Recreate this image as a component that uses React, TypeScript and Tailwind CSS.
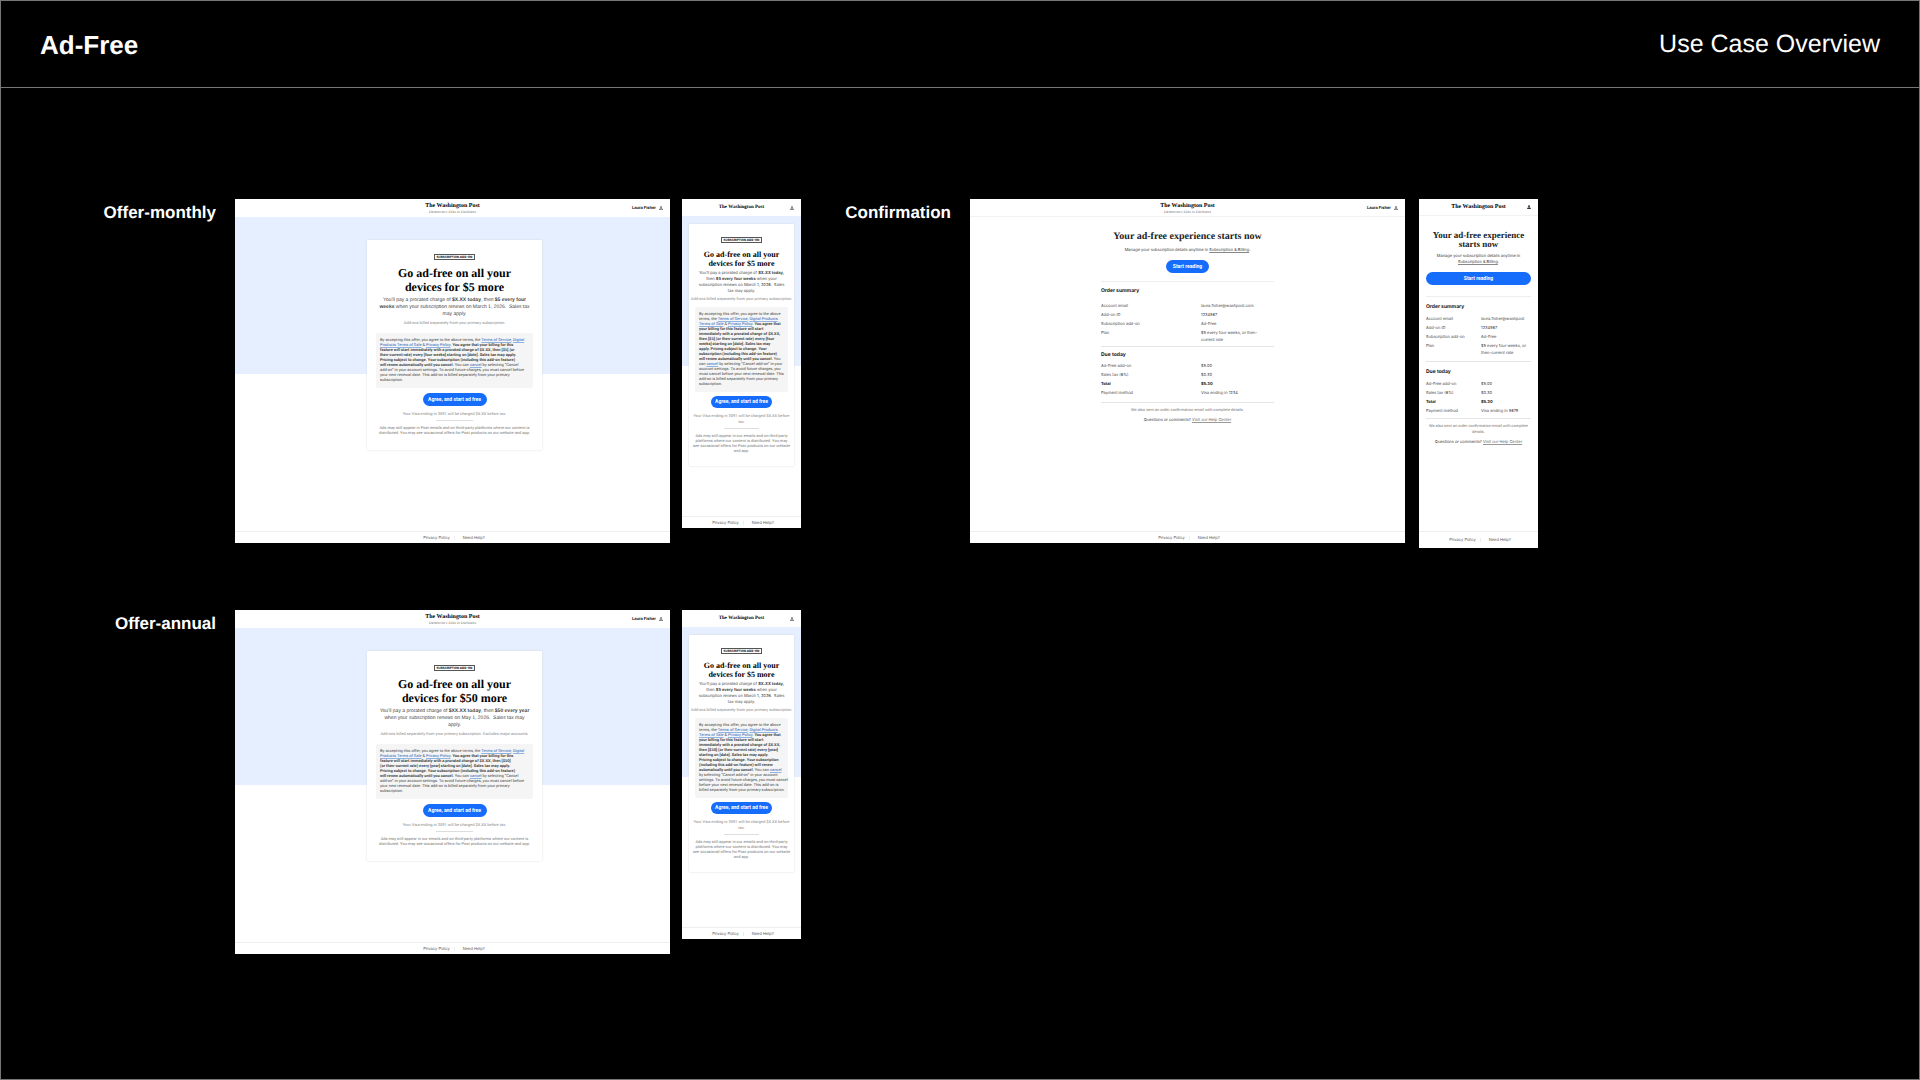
import type { ReactNode } from 'react'
import clsx from 'clsx'

const SERIF = "font-['Liberation_Serif',serif]"
const FINE = "font-['Roboto',sans-serif] text-[4px]"

function Lines({ items, className }: { items: ReactNode[]; className?: string }) {
  return (
    <p className={className}>
      {items.map((line, i) => (
        <span key={i} className="block whitespace-nowrap">{line}</span>
      ))}
    </p>
  )
}

function A({ children }: { children: ReactNode }) {
  return <a href="#" className="text-[#1f62b8] underline decoration-[#8fb4e3]">{children}</a>
}

function UserIcon({ solid }: { solid?: boolean }) {
  return (
    <svg viewBox="0 0 16 16" className="size-[4px] shrink-0" fill={solid ? '#111' : 'none'} stroke="#111" strokeWidth="2">
      <circle cx="8" cy="4.5" r="2.6" />
      <path d="M1.500 14.500c0-3 2-4 4.500-4h4c2.500 0 4.500 1 4.500 4z" />
    </svg>
  )
}

function Masthead({ mobile, solid, bordered }: { mobile?: boolean; solid?: boolean; bordered?: boolean }) {
  return (
    <header
      className={clsx(
        'grid grid-cols-[1fr_auto_1fr] items-center bg-white px-[7px]',
        mobile ? 'h-[17px]' : 'h-[18px]',
        bordered && 'border-b border-[#f2f2f2]'
      )}
    >
      <span />
      <div className={clsx(SERIF, 'text-center whitespace-nowrap text-black')}>
        <div
          className={clsx(
            'font-bold',
            mobile && !solid ? 'text-[5px] leading-[7px]' : 'text-[6px] leading-[8px]'
          )}
        >
          The Washington Post
        </div>
        {!mobile && <div className="text-[4px] leading-[4px] text-[#777] italic">Democracy Dies in Darkness</div>}
      </div>
      <div className="flex items-center justify-end gap-[3px] text-[4px] font-bold text-[#111]">
        {!mobile && <span>Laura Fisher</span>}
        <UserIcon solid={solid} />
      </div>
    </header>
  )
}

function PanelFooter({ tall }: { tall?: boolean }) {
  return (
    <footer
      className={clsx(
        'mt-auto flex items-center justify-center gap-1 border-t border-[#eee] bg-white pl-[3px] text-[4px] text-[#555]',
        tall ? 'h-[17px]' : 'h-[12px]'
      )}
    >
      <a href="#">Privacy Policy</a>
      <span className="h-1 w-px bg-[#eee]" />
      <a href="#" className="ml-1">Need Help?</a>
    </footer>
  )
}

function Pill({ children, className }: { children: ReactNode; className?: string }) {
  return (
    <button
      type="button"
      className={clsx(
        "block rounded-full bg-[#166dfc] text-center font-['Roboto',sans-serif] text-[5px] font-bold whitespace-nowrap text-white",
        className
      )}
    >
      {children}
    </button>
  )
}

type OfferCopy = {
  title: string[]
  price: ReactNode[]
  note: string
  legal: ReactNode[]
  charge: string[]
  ads: string[]
}

function Offer({ copy, mobile }: { copy: OfferCopy; mobile?: boolean }) {
  return (
    <article className={clsx('flex shrink-0 flex-col bg-white', mobile ? 'h-[329px] w-[119px]' : 'h-[344px] w-[435px]')}>
      <Masthead mobile={mobile} />
      <div
        className={clsx(
          'flex grow flex-col items-center',
          mobile
            ? 'bg-[linear-gradient(#e5efff_150px,#ffffff_150px)] pt-[8px]'
            : 'bg-[linear-gradient(#e5efff_157px,#ffffff_157px)] pt-[23px] pl-[4px]'
        )}
      >
        <section
          className={clsx(
            'flex flex-col items-center rounded-[1px] bg-white text-center text-[#444] shadow-[0_0_2px_#d5d5d5]',
            mobile ? 'w-[105px] pt-[13px] pb-[13px]' : 'w-[175px] pt-[14px] pb-[15px]'
          )}
        >
          <div className="border border-[#555] px-[2px] text-[3px] leading-[4px] font-bold whitespace-nowrap text-black">
            SUBSCRIPTION ADD-ON
          </div>
          <Lines
            items={copy.title}
            className={clsx(
              SERIF,
              'font-bold text-black',
              mobile ? 'mt-[7px] text-[8px] leading-[9px]' : 'mt-[6px] text-[12px] leading-[14px]'
            )}
          />
          <Lines
            items={copy.price}
            className={mobile ? 'mt-[2px] text-[4px] leading-[6px]' : "mt-[3px] font-['Liberation_Sans',sans-serif] text-[5px] leading-[7px]"}
          />
          <p className={clsx(FINE, 'mt-[2px] leading-[5px] whitespace-nowrap text-[#888]')}>{copy.note}</p>
          <Lines
            items={copy.legal}
            className={clsx(
              FINE,
              'rounded-[2px] bg-[#f5f5f5] pt-1 pb-[6px] pl-1 text-left leading-[5px]',
              mobile ? 'mt-[6px] w-[93px]' : 'mt-[8px] w-[157px]'
            )}
          />
          <Pill className={mobile ? 'mt-[4px] h-[12px] w-[61px]' : 'mt-[5px] h-[13px] w-[64px]'}>Agree, and start ad free</Pill>
          <Lines items={copy.charge} className={clsx(FINE, 'mt-[5px] leading-[6px] text-[#888]')} />
          <hr className={clsx('mt-[3px] border-[#ddd]', mobile ? 'w-[35px]' : 'w-[37px]')} />
          <Lines items={copy.ads} className={clsx(FINE, 'mt-[4px] leading-[5px] text-[#777]')} />
        </section>
      </div>
      <PanelFooter />
    </article>
  )
}

type Row = { label: string; value: ReactNode; strong?: boolean }

function Rows({ rows, mobile, className }: { rows: Row[]; mobile?: boolean; className?: string }) {
  return (
    <table className={clsx('w-full table-fixed text-left text-[4px] text-[#444]', className)}>
      <tbody>
        {rows.map((row) => (
          <tr key={row.label} className={clsx('align-top leading-[7px] whitespace-nowrap', row.strong && 'font-bold text-[#111]')}>
            <th scope="row" className={clsx('pb-[2px]', mobile ? 'w-[55px]' : 'w-[100px]', row.strong ? 'font-bold' : 'font-normal')}>
              {row.label}
            </th>
            <td className="pb-[2px]">{row.value}</td>
          </tr>
        ))}
      </tbody>
    </table>
  )
}

function Confirmation({ mobile }: { mobile?: boolean }) {
  const order: Row[] = [
    { label: 'Account email', value: mobile ? 'laura.fisher@washpost' : 'laura.fisher@washpost.com' },
    { label: 'Add-on ID', value: '1234567' },
    { label: 'Subscription add-on', value: 'Ad-Free' },
    {
      label: 'Plan',
      value: mobile
        ? <>$5 every four weeks, or<br />then-current rate</>
        : <>$5 every four weeks, or then-<br />current rate</>,
    },
  ]
  const due: Row[] = [
    { label: 'Ad-Free add-on', value: '$5.00' },
    { label: 'Sales tax (6%)', value: '$0.30' },
    { label: 'Total', value: '$5.30', strong: true },
    { label: 'Payment method', value: mobile ? 'Visa ending in 5678' : 'Visa ending in 1234' },
  ]
  const billing = <a href="#" className="underline decoration-[#888]">Subscription &amp; Billing</a>
  const heading = 'text-[5px] leading-[7px] font-bold text-[#111]'

  return (
    <article className={clsx('flex shrink-0 flex-col bg-white', mobile ? 'h-[349px] w-[119px]' : 'h-[344px] w-[435px]')}>
      <Masthead mobile={mobile} solid={mobile} bordered />
      <div className={clsx('mx-auto flex flex-col', mobile ? 'w-[105px] pt-[15px]' : 'w-[173px] pt-[14px]')}>
        <Lines
          items={mobile ? ['Your ad-free experience', 'starts now'] : ['Your ad-free experience starts now']}
          className={clsx(SERIF, 'text-center font-bold text-[#222]', mobile ? 'text-[9px] leading-[9px]' : 'text-[10px] leading-[11px]')}
        />
        <Lines
          items={mobile
            ? ['Manage your subscription details anytime in', <>{billing}.</>]
            : [<>Manage your subscription details anytime in {billing}.</>]}
          className={clsx('mt-[4px] text-center text-[4px] text-[#333]', mobile ? 'leading-[6px]' : 'leading-[7px]')}
        />
        <Pill className={mobile ? 'mt-[7px] h-[13px] w-full' : 'mx-auto mt-[7px] h-[13px] w-[43px]'}>Start reading</Pill>
        <hr className={clsx('border-[#eee]', mobile ? 'mt-[11px]' : 'mt-[8px]')} />
        <h2 className={clsx(heading, mobile ? 'mt-[7px]' : 'mt-[6px]')}>Order summary</h2>
        <Rows rows={order} mobile={mobile} className={mobile ? 'mt-[4px]' : 'mt-[7px]'} />
        <hr className={clsx('border-[#e5e5e5]', mobile ? 'mt-[3px]' : 'mt-[1px]')} />
        <h2 className={clsx(heading, mobile ? 'mt-[7px]' : 'mt-[5px]')}>Due today</h2>
        <Rows rows={due} mobile={mobile} className={mobile ? 'mt-[4px]' : 'mt-[3px]'} />
        <hr className={clsx('border-[#e5e5e5]', mobile ? 'mt-[2px]' : 'mt-[4px]')} />
        <Lines
          items={mobile
            ? ['We also sent an order confirmation email with complete', 'details.']
            : ['We also sent an order confirmation email with complete details.']}
          className={clsx(FINE, 'mt-[4px] text-center leading-[6px] text-[#777]')}
        />
        <p className="mt-[3px] text-center text-[4px] leading-[7px] whitespace-nowrap text-[#333]">
          Questions or comments? <a href="#" className="text-[#666] underline decoration-[#999]">Visit our Help Center</a>
        </p>
      </div>
      <PanelFooter tall={mobile} />
    </article>
  )
}

function UseCase({ name, children }: { name: string; children: ReactNode }) {
  return (
    <section className="flex items-start">
      <h2 className="mr-[19px] w-[116px] pt-1 text-right font-['Liberation_Sans',sans-serif] text-[17px] leading-5 font-bold text-white">
        {name}
      </h2>
      {children}
    </section>
  )
}

const ads = [
  'Ads may still appear in Post emails and on third-party platforms where our content is',
  'distributed. You may see occasional offers for Post products on our website and app.',
]
const adsMobile = [
  'Ads may still appear in our emails and on third-party',
  'platforms where our content is distributed. You may',
  'see occasional offers for Post products on our website',
  'and app.',
]
const charge = ['Your Visa ending in 3091 will be charged $X.XX before tax.']
const chargeMobile = ['Your Visa ending in 3091 will be charged $X.XX before', 'tax.']
const note = 'Add-ons billed separately from your primary subscription.'

const monthly: OfferCopy = {
  title: ['Go ad-free on all your', 'devices for $5 more'],
  price: [
    <>You’ll pay a prorated charge of <b>$X.XX today</b>, then <b>$5 every four</b></>,
    <><b>weeks</b> when your subscription renews on March 1, 2026.&nbsp; Sales tax</>,
    'may apply.',
  ],
  note,
  legal: [
    <>By accepting this offer, you agree to the above terms, the <A>Terms of Service</A>, <A>Digital</A></>,
    <><A>Products Terms of Sale</A> &amp; <A>Privacy Policy</A>. <b>You agree that your billing for this</b></>,
    <b>feature will start immediately with a prorated charge of $X.XX, then [$5] (or</b>,
    <b>then-current rate) every [four weeks] starting on [date]. Sales tax may apply.</b>,
    <b>Pricing subject to change. Your subscription (including this add-on feature)</b>,
    <><b>will renew automatically until you cancel.</b> You can <A>cancel</A> by selecting “Cancel</>,
    'add-on” in your account settings. To avoid future charges, you must cancel before',
    'your next renewal date. This add-on is billed separately from your primary',
    'subscription.',
  ],
  charge,
  ads,
}

const priceMobile: ReactNode[] = [
  <>You’ll pay a prorated charge of <b>$X.XX today,</b></>,
  <>then <b>$5 every four weeks</b> when your</>,
  <>subscription renews on March 1, 2026.&nbsp; Sales</>,
  'tax may apply.',
]

const monthlyMobile: OfferCopy = {
  title: monthly.title,
  price: priceMobile,
  note,
  legal: [
    'By accepting this offer, you agree to the above',
    <>terms, the <A>Terms of Service</A>, <A>Digital Products</A></>,
    <><A>Terms of Sale</A> &amp; <A>Privacy Policy</A>. <b>You agree that</b></>,
    <b>your billing for this feature will start</b>,
    <b>immediately with a prorated charge of $X.XX,</b>,
    <b>then [$5] (or then-current rate) every [four</b>,
    <b>weeks] starting on [date]. Sales tax may</b>,
    <b>apply. Pricing subject to change. Your</b>,
    <b>subscription (including this add-on feature)</b>,
    <><b>will renew automatically until you cancel.</b> You</>,
    <>can <A>cancel</A> by selecting “Cancel add-on” in your</>,
    'account settings. To avoid future charges, you',
    'must cancel before your next renewal date. This',
    'add-on is billed separately from your primary',
    'subscription.',
  ],
  charge: chargeMobile,
  ads: adsMobile,
}

const annual: OfferCopy = {
  title: ['Go ad-free on all your', 'devices for $50 more'],
  price: [
    <>You’ll pay a prorated charge of <b>$XX.XX today</b>, then <b>$50 every year</b></>,
    <>when your subscription renews on May 1, 2026.&nbsp; Sales tax may</>,
    'apply.',
  ],
  note: 'Add-ons billed separately from your primary subscription. Excludes major accounts.',
  legal: [
    <>By accepting this offer, you agree to the above terms, the <A>Terms of Service</A>, <A>Digital</A></>,
    <><A>Products Terms of Sale</A> &amp; <A>Privacy Policy</A>. <b>You agree that your billing for this</b></>,
    <b>feature will start immediately with a prorated charge of $X.XX, then [$50]</b>,
    <b>(or then-current rate) every [year] starting on [date]. Sales tax may apply.</b>,
    <b>Pricing subject to change. Your subscription (including this add-on feature)</b>,
    <><b>will renew automatically until you cancel.</b> You can <A>cancel</A> by selecting “Cancel</>,
    'add-on” in your account settings. To avoid future charges, you must cancel before',
    'your next renewal date. This add-on is billed separately from your primary',
    'subscription.',
  ],
  charge,
  ads: [
    'Ads may still appear in our emails and on third-party platforms where our content is',
    ads[1],
  ],
}

const annualMobile: OfferCopy = {
  title: monthly.title,
  price: priceMobile,
  note,
  legal: [
    'By accepting this offer, you agree to the above',
    <>terms, the <A>Terms of Service</A>, <A>Digital Products</A></>,
    <><A>Terms of Sale</A> &amp; <A>Privacy Policy</A>. <b>You agree that</b></>,
    <b>your billing for this feature will start</b>,
    <b>immediately with a prorated charge of $X.XX,</b>,
    <b>then [$50] (or then-current rate) every [year]</b>,
    <b>starting on [date]. Sales tax may apply.</b>,
    <b>Pricing subject to change. Your subscription</b>,
    <b>(including this add-on feature) will renew</b>,
    <><b>automatically until you cancel.</b> You can <A>cancel</A></>,
    'by selecting “Cancel add-on” in your account',
    'settings. To avoid future charges, you must cancel',
    'before your next renewal date. This add-on is',
    'billed separately from your primary subscription.',
  ],
  charge: chargeMobile,
  ads: adsMobile,
}

export default function App() {
  return (
    <div className="min-h-screen border border-[#777] bg-black font-['Inter',sans-serif] [text-rendering:geometricPrecision]">
      <header className="flex h-[87px] items-center justify-between border-b border-[#777] px-[39px] pt-[2px] font-['Liberation_Sans',sans-serif] text-white">
        <h1 className="text-[26px] font-bold">Ad-Free</h1>
        <p className="text-[25px]">Use Case Overview</p>
      </header>
      <main className="flex flex-col gap-[62px] px-[99px] pt-[111px] pb-[111px]">
        <div className="flex items-start gap-[34px]">
          <UseCase name="Offer-monthly">
            <div className="flex items-start gap-[12px]">
              <Offer copy={monthly} />
              <Offer copy={monthlyMobile} mobile />
            </div>
          </UseCase>
          <UseCase name="Confirmation">
            <div className="flex items-start gap-[14px]">
              <Confirmation />
              <Confirmation mobile />
            </div>
          </UseCase>
        </div>
        <UseCase name="Offer-annual">
          <div className="flex items-start gap-[12px]">
            <Offer copy={annual} />
            <Offer copy={annualMobile} mobile />
          </div>
        </UseCase>
      </main>
    </div>
  )
}
